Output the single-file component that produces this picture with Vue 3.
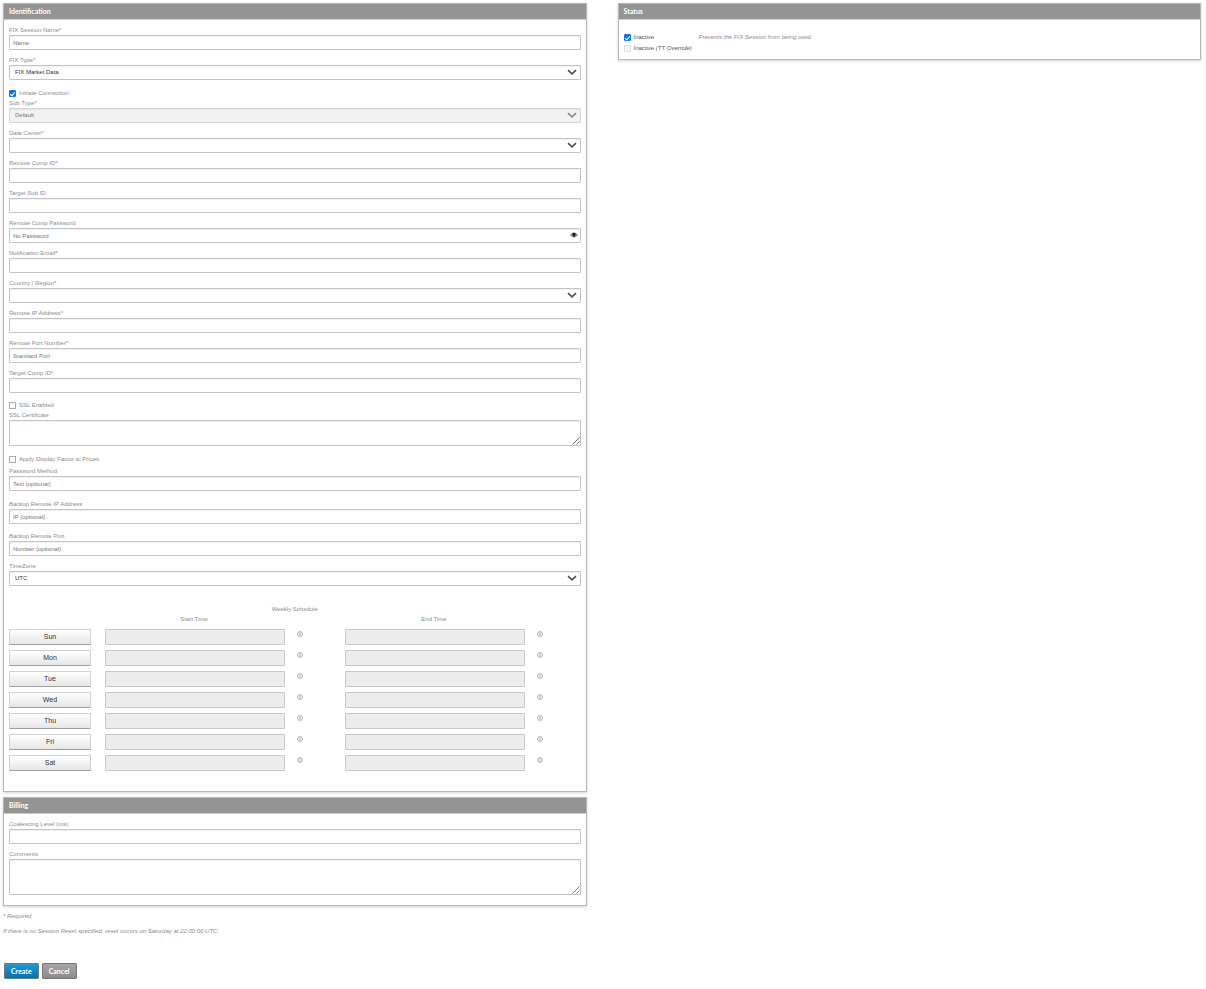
<script setup>
import { reactive } from 'vue'

const fields = reactive([
  { id: 'name', label: 'FIX Session Name*', kind: 'text', hint: 'Name' },
  { id: 'type', label: 'FIX Type*', kind: 'select', value: 'FIX Market Data', options: ['FIX Market Data', 'FIX Order Routing'] },
  { id: 'initiate', label: 'Initiate Connection', kind: 'check', value: true, gap: 'gap-check' },
  { id: 'subtype', label: 'Sub Type*', kind: 'select', value: 'Default', options: ['Default'], disabled: true, gap: 'gap-none' },
  { id: 'dc', label: 'Data Center*', kind: 'select', value: '', options: [''] },
  { id: 'rcomp', label: 'Remote Comp ID*', kind: 'text' },
  { id: 'tsub', label: 'Target Sub ID', kind: 'text' },
  { id: 'rpass', label: 'Remote Comp Password', kind: 'password', hint: 'No Password' },
  { id: 'email', label: 'Notification Email*', kind: 'text' },
  { id: 'country', label: 'Country / Region*', kind: 'select', value: '', options: [''] },
  { id: 'rip', label: 'Remote IP Address*', kind: 'text' },
  { id: 'rport', label: 'Remote Port Number*', kind: 'text', hint: 'Standard Port' },
  { id: 'tcomp', label: 'Target Comp ID*', kind: 'text' },
  { id: 'ssl', label: 'SSL Enabled', kind: 'check', value: false, gap: 'gap-wide' },
  { id: 'cert', label: 'SSL Certificate', kind: 'area', gap: 'gap-none' },
  { id: 'factor', label: 'Apply Display Factor to Prices', kind: 'check', value: false, gap: 'gap-check' },
  { id: 'pmethod', label: 'Password Method', kind: 'text', hint: 'Text (optional)', gap: 'gap-small' },
  { id: 'bip', label: 'Backup Remote IP Address', kind: 'text', hint: 'IP (optional)', gap: 'gap-check' },
  { id: 'bport', label: 'Backup Remote Port', kind: 'text', hint: 'Number (optional)', gap: 'gap-wide' },
  { id: 'tz', label: 'TimeZone', kind: 'select', value: 'UTC', options: ['UTC'] },
])
const billing = reactive([
  { id: 'coalesce', label: 'Coalescing Level (ms)', kind: 'text' },
  { id: 'comments', label: 'Comments', kind: 'area', tall: true },
])
const panels = [
  { title: 'Identification', fields, schedule: true },
  { title: 'Billing', fields: billing },
]
const days = ['Sun', 'Mon', 'Tue', 'Wed', 'Thu', 'Fri', 'Sat']
const times = ['Start', 'End']
</script>

<template>
  <form class="page" @submit.prevent>
    <div class="column">
      <section v-for="p in panels" :key="p.title" class="panel">
        <h2>{{ p.title }}</h2>
        <div class="body" :class="{ scheduled: p.schedule }">
          <div v-for="f in p.fields" :key="f.id" class="field" :class="f.gap">
            <label v-if="f.kind === 'check'" class="check">
              <input v-model="f.value" type="checkbox" />{{ f.label }}
            </label>
            <template v-else>
              <label :for="f.id">{{ f.label }}</label>
              <div class="control">
                <template v-if="f.kind === 'select'">
                  <select :id="f.id" v-model="f.value" :disabled="f.disabled">
                    <option v-for="o in f.options" :key="o">{{ o }}</option>
                  </select>
                  <svg class="chevron" :class="{ dim: f.disabled }" viewBox="0 0 10 7"><path d="M1 1.2 5 4.8 9 1.2" /></svg>
                </template>
                <template v-else-if="f.kind === 'area'">
                  <textarea :id="f.id" :class="{ tall: f.tall }"></textarea>
                  <svg class="grip" viewBox="0 0 8 8"><path d="M.5 7.5 7.5 .5M4.5 7.5 7.5 4.5" /></svg>
                </template>
                <template v-else>
                  <input :id="f.id" :type="f.kind" :placeholder="f.hint" />
                  <button v-if="f.kind === 'password'" type="button" class="eye" aria-label="Show password">
                    <svg viewBox="0 0 8 6"><path d="M.5 3Q4-1 7.5 3Q4 7 .5 3Z" fill="none" stroke="#333" stroke-width=".8" /><circle cx="4" cy="2.8" r="1.8" fill="#111" /></svg>
                  </button>
                </template>
              </div>
            </template>
          </div>

          <table v-if="p.schedule">
            <caption>Weekly Schedule</caption>
            <thead>
              <tr>
                <th class="day-col"></th>
                <th v-for="t in times" :key="t" class="time-col"><span>{{ t }} Time</span></th>
              </tr>
            </thead>
            <tbody>
              <tr v-for="d in days" :key="d">
                <td><button type="button" class="day">{{ d }}</button></td>
                <td v-for="t in times" :key="t">
                  <div class="time">
                    <input type="text" disabled :aria-label="`${d} ${t} Time`" />
                    <svg viewBox="0 0 6 6"><circle cx="3" cy="3" r="2.4" /><path d="M3 1.5V4.5" /></svg>
                  </div>
                </td>
              </tr>
            </tbody>
          </table>
        </div>
      </section>

      <p class="note">* Required</p>
      <p class="note">If there is no Session Reset specified, reset occurs on Saturday at 22:00:00 UTC.</p>
      <div class="actions">
        <button type="submit" class="create">Create</button>
        <button type="button" class="cancel">Cancel</button>
      </div>
    </div>

    <section class="panel status">
      <h2>Status</h2>
      <div class="body">
        <div class="row">
          <label class="check"><input type="checkbox" checked />Inactive</label>
          <em>Prevents the FIX Session from being used.</em>
        </div>
        <div class="row">
          <label class="check"><input type="checkbox" disabled /><span>Inactive <i>(TT Override)</i></span></label>
        </div>
      </div>
    </section>
  </form>
</template>

<style>
body {
  background: #fff;
}
</style>

<style scoped>
* {
  box-sizing: border-box;
}
.page {
  display: grid;
  grid-template-columns: 1fr 1fr;
  column-gap: 31px;
  align-items: start;
  padding: 3px 5px 10px 3px;
  font: 6px/10px "Liberation Sans", Arial, sans-serif;
  color: #8c8c8c;
}
.panel {
  margin-bottom: 5px;
  border: 1px solid #b8b8b8;
  box-shadow: 0 1px 3px rgba(0, 0, 0, 0.18);
  background: #fff;
}
h2 {
  margin: 0;
  padding: 0 5px;
  font: 700 7px/15px Lato, sans-serif;
  color: #fff;
  background: #949494;
  border-bottom: 1px solid #ccc;
}
.body {
  padding: 5px 5px 10px;
}
.body.scheduled {
  padding-bottom: 15px;
}
.field + .field {
  margin-top: 5px;
}
.field.gap-none {
  margin-top: 0;
}
.field.gap-small {
  margin-top: 2px;
}
.field.gap-wide {
  margin-top: 7px;
}
.field.gap-check {
  margin-top: 8px;
}
label {
  display: block;
}
.check {
  display: flex;
  align-items: center;
  gap: 3px;
}
.check input {
  appearance: none;
  display: flex;
  justify-content: center;
  width: 7px;
  height: 7px;
  margin: 0;
  border: 1px solid #aaa;
  background: #fff;
}
.check input:checked {
  border-color: #0075ff;
  border-radius: 1px;
  background: #0075ff;
}
.check input:checked::after {
  content: "";
  width: 2px;
  height: 4px;
  border: solid #fff;
  border-width: 0 1px 1px 0;
  transform: rotate(40deg);
}
.check input:disabled {
  border-color: #ddd;
  border-radius: 1px;
  background: #f6f6f6;
}
.control {
  position: relative;
  display: flex;
}
.control input,
select,
textarea {
  width: 100%;
  height: 15px;
  margin: 0;
  padding: 0 3px;
  border: 1px solid #c4c4c4;
  border-radius: 1px;
  background: #fff;
  box-shadow: inset 0 1px 1px rgba(0, 0, 0, 0.06);
  font: 6px/13px "Liberation Sans", Arial, sans-serif;
  color: #333;
}
.control input::placeholder {
  color: #757575;
  opacity: 1;
}
select {
  appearance: none;
  padding: 0 5px;
}
select:disabled {
  background: #f2f2f2;
  border-color: #d6d6d6;
  color: #777;
  opacity: 1;
}
textarea {
  height: 26px;
  resize: none;
}
textarea.tall {
  height: 36px;
}
.chevron {
  position: absolute;
  right: 4px;
  top: 4px;
  width: 10px;
  height: 7px;
  fill: none;
  stroke: #505050;
  stroke-width: 1.7;
  pointer-events: none;
}
.chevron.dim {
  stroke: #8a8a8a;
}
.grip {
  position: absolute;
  right: 1px;
  bottom: 1px;
  width: 8px;
  height: 8px;
  fill: none;
  stroke: #555;
  stroke-width: 0.8;
  pointer-events: none;
}
.eye {
  position: absolute;
  right: 3px;
  top: 4px;
  display: flex;
  padding: 0;
  border: 0;
  background: none;
}
.eye svg {
  width: 8px;
  height: 6px;
}
table {
  width: 100%;
  margin-top: 18px;
  table-layout: fixed;
  border-collapse: collapse;
}
caption {
  line-height: 10px;
}
th,
td {
  padding: 0;
}
.day-col {
  width: 96px;
}
th span {
  display: block;
  width: 178px;
  font-weight: 400;
}
thead th {
  height: 15px;
  vertical-align: top;
}
tbody td {
  height: 21px;
  vertical-align: top;
}
.time-col:nth-child(2) {
  width: 240px;
}
.day {
  display: block;
  width: 82px;
  height: 16px;
  padding: 0;
  border: 1px solid #d2d2d2;
  border-bottom-color: #a0a0a0;
  border-radius: 1px;
  background: linear-gradient(#fff, #e6e6e6);
  font: 7px/14px "Liberation Sans", Arial, sans-serif;
  color: #333;
}
.time {
  display: flex;
  align-items: flex-start;
  gap: 12px;
}
.time input {
  width: 180px;
  height: 16px;
  padding: 0 3px;
  border: 1px solid #c8c8c8;
  border-radius: 1px;
  background: #ececec;
}
.time svg {
  width: 6px;
  height: 6px;
  margin-top: 2px;
  fill: none;
  stroke: #999;
  stroke-width: 0.8;
}
.note {
  margin: 5px 0 0;
  font-style: italic;
}
.actions {
  display: flex;
  gap: 3px;
  margin-top: 27px;
  padding-left: 1px;
}
.actions button {
  height: 16px;
  padding: 0 6px;
  border: 1px solid #777;
  border-radius: 1px;
  font: 700 7px/14px Lato, sans-serif;
  color: #fff;
}
.actions .create {
  background: linear-gradient(#1b9ad6, #0873ad);
}
.actions .cancel {
  background: linear-gradient(#a6a6a6, #8c8c8c);
}
.status .body {
  padding: 12px 5px 5px;
  color: #555;
}
.status .row {
  display: flex;
  margin-bottom: 1px;
}
.status .row .check {
  width: 75px;
}
.status em {
  color: #8c8c8c;
}
</style>
